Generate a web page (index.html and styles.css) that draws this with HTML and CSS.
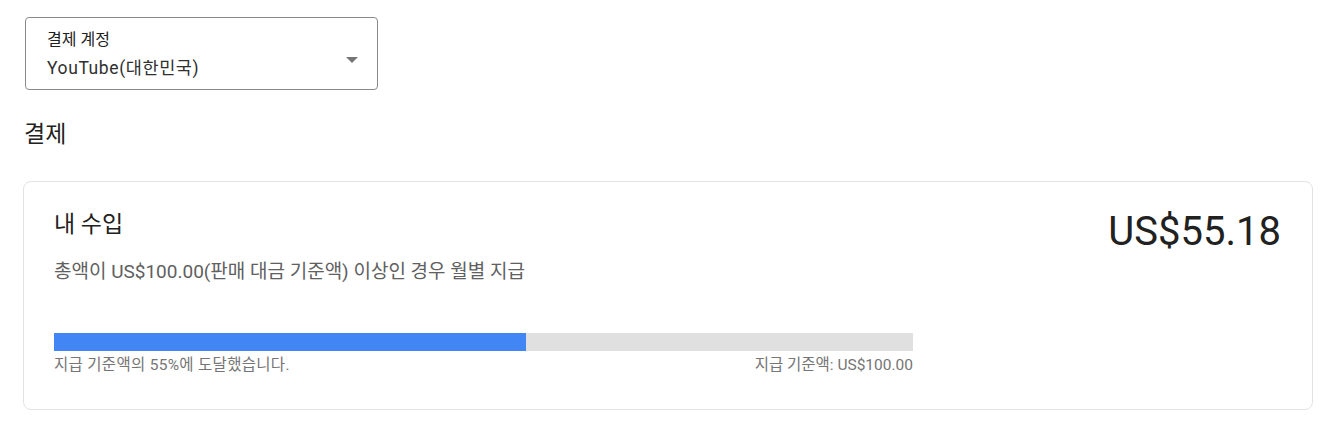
FILE: index.html
```html
<!DOCTYPE html>
<html lang="ko">
	<head>
		<meta charset="UTF-8" />
		<meta name="viewport" content="width=device-width, initial-scale=1.0" />
		<title>결제</title>
		<link rel="stylesheet" href="styles.css">
	</head>
	<body>
		<div class="page">
			<div class="account-select">
				<div class="select-text">
					<span class="select-label">결제 계정</span>
					<span class="select-value">YouTube(대한민국)</span>
				</div>
				<span class="select-arrow"></span>
			</div>

			<h2 class="section-title">결제</h2>

			<div class="card">
				<div class="card-head">
					<div class="card-info">
						<h3 class="card-title">내 수입</h3>
						<p class="card-desc">총액이 US$100.00(판매 대금 기준액) 이상인 경우 월별 지급</p>
					</div>
					<div class="amount">US$55.18</div>
				</div>
				<div class="progress">
					<div class="progress-track">
						<div class="progress-fill" style="width: 55%"></div>
					</div>
					<div class="progress-labels">
						<span class="label-reached">지급 기준액의 55%에 도달했습니다.</span>
						<span>지급 기준액: US$100.00</span>
					</div>
				</div>
			</div>
		</div>
	</body>
</html>
```

FILE: styles.css
```css
body {
	margin: 0;
	background-color: #fff;
	font-family: Roboto, "Noto Sans CJK KR", sans-serif;
	color: #212121;
}

.page {
	padding: 17px 18px 0 23px;
}

.account-select {
	display: flex;
	align-items: flex-start;
	justify-content: space-between;
	width: 353px;
	height: 73px;
	margin-left: 2px;
	box-sizing: border-box;
	border: 1px solid #8a8a8a;
	border-radius: 4px;
	padding: 11px 19px 0 21px;
}

.select-text {
	display: flex;
	flex-direction: column;
}

.select-label {
	font-size: 16px;
	line-height: 21px;
	color: #212121;
}

.select-value {
	font-size: 17.5px;
	line-height: 24px;
	margin-top: 6px;
	letter-spacing: 0.6px;
	color: #303030;
}

.select-arrow {
	align-self: center;
	width: 0;
	height: 0;
	border-left: 6px solid transparent;
	border-right: 6px solid transparent;
	border-top: 6px solid #757575;
	margin-top: 2px;
}

.section-title {
	margin: 29px 0 0 1px;
	font-size: 23px;
	font-weight: 400;
	line-height: 31px;
}

.card {
	margin-top: 31px;
	border: 1px solid #e3e3e3;
	border-radius: 8px;
	padding: 24px 31px 34px 30px;
}

.card-head {
	display: flex;
	justify-content: space-between;
	align-items: flex-start;
}

.card-title {
	margin: 3px 0 0 0;
	font-size: 23px;
	font-weight: 400;
	line-height: 31px;
}

.card-desc {
	margin: 19px 0 0 0;
	font-size: 19px;
	line-height: 26px;
	color: #606060;
}

.amount {
	font-size: 40px;
	line-height: 52px;
	margin-top: 0;
}

.progress {
	width: 859px;
	margin-top: 48px;
}

.progress-track {
	height: 18px;
	background-color: #e0e0e0;
}

.progress-fill {
	height: 100%;
	background-color: #4285f4;
}

.progress-labels {
	display: flex;
	justify-content: space-between;
	margin-top: 4px;
	font-size: 15.5px;
	line-height: 20px;
	color: #757575;
}

.label-reached {
	letter-spacing: 0.3px;
}
```
